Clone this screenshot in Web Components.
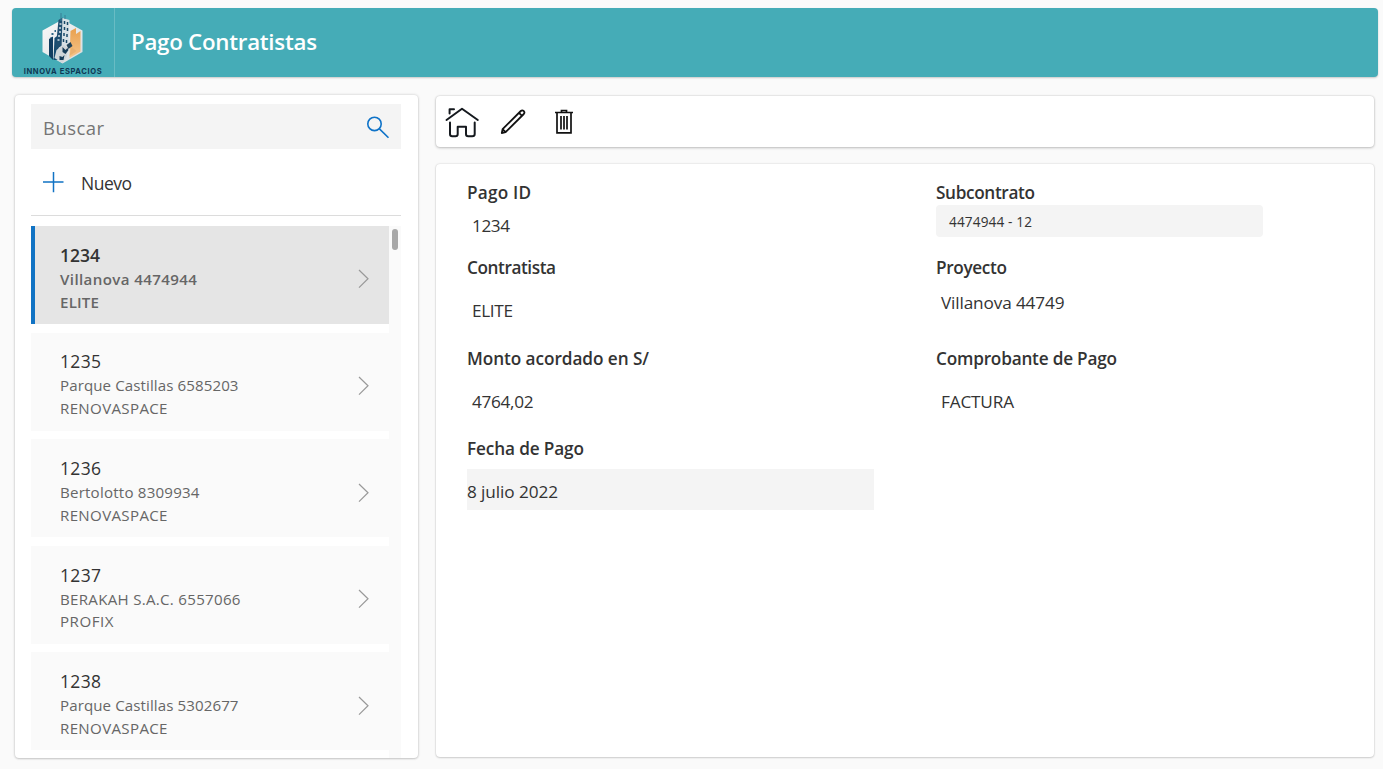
<!DOCTYPE html>
<html lang="es">
<head>
<meta charset="utf-8">
<title>Pago Contratistas</title>
<style>
html,body{margin:0;height:100%}
body{background:#fafafa;font-family:"Open Sans","Noto Sans",sans-serif;overflow:hidden}
</style>
</head>
<body>
<pago-app></pago-app>
<script>
const define = (name, html, setup) => customElements.define(name, class extends HTMLElement {
  constructor() {
    super();
    this.attachShadow({ mode: 'open' });
  }
  connectedCallback() {
    if (this.shadowRoot.childNodes.length) return;
    this.shadowRoot.innerHTML = html;
    if (setup) setup(this, this.shadowRoot);
  }
});

/* A line of text whose tracking is adjusted to span `w` pixels. */
define('fit-text', `<style>
:host{display:block;white-space:pre;line-height:24px}
span{display:inline-block}
</style><span><slot></slot></span>`, (host, root) => {
  const span = root.querySelector('span');
  const target = parseFloat(host.getAttribute('w'));
  const count = host.textContent.length;
  if (target && count > 1) {
    const natural = span.getBoundingClientRect().width;
    span.style.letterSpacing = ((target - natural) / (count - 1)).toFixed(3) + 'px';
  }
});

define('brand-logo', `<style>
:host{display:flex;flex-direction:column;align-items:center;height:70px;border-right:1px solid #69bcc4;box-sizing:border-box;padding-top:4px;flex:none;width:103px}
svg{display:block;flex:none}
fit-text{font:700 7.6px/9px "Inter","Open Sans",sans-serif;color:#0f3854;margin-top:3.5px}
</style>
<svg width="46" height="52" viewBox="39.500 12 46 52">
<defs><linearGradient id="g" x1="0" y1="0" x2="1" y2="1"><stop offset="0" stop-color="#fafafa"/><stop offset="1" stop-color="#d5dadd"/></linearGradient>
<linearGradient id="o" x1="0" y1="0" x2="0" y2="1"><stop offset="0" stop-color="#e9a04d"/><stop offset="1" stop-color="#f5c58b"/></linearGradient></defs>
<path d="M62 19.500 82 30.500V52L62 63.500 42 52V30.500Z" fill="url(#g)"/>
<path d="M70 31 75.500 28V34L80 31V51.500L69 58Z" fill="url(#o)"/>
<path d="M48.500 39 52.500 36.500V60L48.500 56Z" fill="#123d60"/>
<path d="M54 38 58 35V60H53Z" fill="#174b70"/>
<path d="M58 20 62 17.500 63.500 44 55 50Z" fill="#204f70"/>
<path d="M62 18 69 20 68 45 61 49Z" fill="#d8e0e5"/>
<path d="M60.500 13V21M64.500 15V19" stroke="#397f96" stroke-width="1"/>
<path d="M59 24h2M58.500 28h2M58.500 32h2M57.500 36h2M57 40h2" stroke="#cfdce3" stroke-width="1.300"/>
<path d="M64 21v3M67 22v3M64 27v3M67 28v3M63.500 33v3M66.500 34v3M63 39v3M66 40v3" stroke="#194867" stroke-width="1.500"/>
<path d="M51 33h2v2h-2zM54 30h1.500v2H54zM50 37h1.500v1H50z" fill="#2f6686"/>
<path d="M56 50 63 45 68 48 66 57 62 63 54 58Z" fill="#cfd5d9"/>
<path d="M62 47 65 50 67 48 68 50 65 54 62 52ZM59 56 62 57 64 55 63 60 59 60Z" fill="#173c59"/>
<path d="M66 45 70 42 72 46 68 49Z" fill="#22445b"/>
<path d="M71 47 76 51 69 56Z" fill="#e8b170"/>
</svg><fit-text w="78">INNOVA ESPACIOS</fit-text>`);

define('app-header', `<style>
:host{display:flex;height:69.500px;background:#45acb7;border-radius:4px;box-shadow:0 1px 2px #0003;overflow:hidden}
fit-text{font-weight:600;font-size:22.300px;line-height:28px;color:#fff;margin:20px 0 0 16px}
</style><brand-logo></brand-logo><fit-text w="186">Pago Contratistas</fit-text>`);

define('search-box', `<style>
:host{display:flex;justify-content:space-between;height:45px;background:#f4f4f4;padding:0 10.500px 0 12.500px;box-sizing:border-box}
fit-text{font-size:18.500px;line-height:26px;color:#757575;margin-top:10.800px}
svg{margin-top:11.500px}
</style><fit-text w="61">Buscar</fit-text>
<svg width="24" height="24" viewBox="0 0 24 24" fill="none" stroke="#0f73c8" stroke-width="1.600"><circle cx="8.500" cy="7.900" r="6.700"/><path d="M13.200 12.600 22.500 21.700"/></svg>`);

define('new-button', `<style>
:host{display:flex;height:65.500px;border-bottom:1px solid #dcdcdc;padding-left:12px;gap:17.500px;color:#333}
svg{margin-top:22px}
fit-text{margin-top:21.500px;font-size:17.500px}
</style><svg width="21" height="22" viewBox="0 0 21 22" stroke="#1173c4" stroke-width="1.500"><path d="M0 10.900H20.500M10.500 .900V21.200"/></svg>
<fit-text w="51">Nuevo</fit-text>`);

define('list-item', `<style>
:host{display:flex;justify-content:space-between;height:98px;background:#fafafa;box-sizing:border-box;padding:0 19px 0 29.500px;color:#666}
:host([selected]){background:#e5e5e5;border-left:4px solid #1173c4;padding-left:25.500px;font-weight:600}
.t{padding-top:16.800px}
.id{font-size:17.500px;line-height:25px;color:#333}
.n{font-size:15.100px;line-height:22.800px}
svg{margin-top:43.500px}
</style><div class="t"></div>
<svg width="13" height="20" viewBox="0 0 13 20" fill="none" stroke="#999" stroke-width="1.200"><path d="M2 1 11 9.800 2 18.600"/></svg>`, (host, root) => {
  const box = root.querySelector('.t');
  const widths = host.getAttribute('w').split(',');
  ['id', 'name', 'company'].forEach((key, i) => {
    const line = document.createElement('fit-text');
    line.className = i ? 'n' : 'id';
    line.setAttribute('w', widths[i]);
    line.textContent = host.getAttribute('data-' + key);
    box.append(line);
  });
});

define('side-panel', `<style>
:host{display:block;width:403px;height:663.500px;box-sizing:border-box;background:#fff;border-radius:4px;box-shadow:0 0 3px #0003,0 1px 2px #0002;padding:9.900px 17px 0 16px;overflow:hidden}
.g{display:flex;height:533px;margin-top:10px}
.l{display:flex;flex-direction:column;gap:8.600px;width:358px;flex:none}
.s{width:12px;background:#fafafa;padding:3.500px 0 0 3px;box-sizing:border-box}
.s i{display:block;width:6px;height:20.500px;border-radius:3px;background:#a8a8a8}
</style><search-box></search-box><new-button></new-button>
<div class="g"><div class="l">
<list-item selected data-id="1234" data-name="Villanova 4474944" data-company="ELITE" w="40,137,39"></list-item>
<list-item data-id="1235" data-name="Parque Castillas 6585203" data-company="RENOVASPACE" w="41,178.5,107.500"></list-item>
<list-item data-id="1236" data-name="Bertolotto 8309934" data-company="RENOVASPACE" w="41,139.500,107.500"></list-item>
<list-item data-id="1237" data-name="BERAKAH S.A.C. 6557066" data-company="PROFIX" w="41,180.500,53.500"></list-item>
<list-item data-id="1238" data-name="Parque Castillas 5302677" data-company="RENOVASPACE" w="41,178.500,107.500"></list-item>
</div><div class="s"><i></i></div></div>`);

define('tool-bar', `<style>
:host{display:block;height:51px;background:#fff;border-radius:4px;box-shadow:0 0 2px #0003,0 1px 3px #0003}
div{display:flex;padding:9.500px 0 0 9px}
svg{display:block}
</style><div>
<svg width="36" height="32" viewBox="445 106 36 32" fill="none" stroke="#15191e" stroke-width="2" stroke-linecap="round" stroke-linejoin="round"><path d="M446.500 120 462 108.700 477.800 120M449.600 113.500V109.200H454M450 122.500V134Q450 136.200 452.200 136.200H455.500Q457.700 136.200 457.700 134V126.800H466V134Q466 136.200 468.200 136.200H472.200Q474.700 136.200 474.700 134V122.500"/></svg>
<svg style="margin-left:19px" width="27" height="32" viewBox="500 106 27 32" fill="none" stroke="#111" stroke-width="1.800" stroke-linejoin="round"><path d="M501.800 133 502.600 129.200 520.800 111Q522.200 109.700 523.700 111 525.100 112.600 523.800 114L505.600 132.200ZM502.600 129.200 505.600 132.200M519 112.800 522 115.800"/></svg>
<svg style="margin-left:27px" width="20" height="32" viewBox="554 106 20 32" fill="none" stroke="#111" stroke-width="1.700"><path d="M555 112.500H573M561.500 112V110.500H566.500V112M557 113V132.800H571V113M561 116V129.500M564 116V129.500M567 116V129.500"/></svg>
</div>`);

define('form-field', `<style>
:host{display:block;color:#333}
fit-text{font-size:17.200px}
.label{font-weight:600}
.value{box-sizing:border-box;height:24px;padding-left:5px;margin-top:var(--gap,9px)}
:host([kind=combo]) .value{width:327px;height:32px;background:#f4f4f4;border-radius:4px;padding:4.500px 0 0 13px;font-size:13.600px;margin-top:0}
:host([kind=date]) .value{width:407px;height:41px;background:#f4f4f4;padding:11px 0 0 0;margin-top:8px}
</style><fit-text class="label"></fit-text><fit-text class="value"></fit-text>`, (host, root) => {
  const widths = host.getAttribute('w').split(',');
  ['label', 'value'].forEach((key, i) => {
    const old = root.querySelector('.' + key);
    const line = document.createElement('fit-text');
    line.className = key;
    line.setAttribute('w', widths[i]);
    line.textContent = host.getAttribute(key);
    old.replaceWith(line);
  });
});

define('detail-form', `<style>
:host{display:grid;grid-template-columns:469px 1fr;grid-template-rows:75px 91px 90px 90px;height:593px;box-sizing:border-box;background:#fff;border-radius:4px;box-shadow:0 0 2px #0003,0 1px 2px #0002;padding:17px 0 0 31px}
</style>
<form-field label="Pago ID" value="1234" w="64,38"></form-field>
<form-field kind="combo" label="Subcontrato" value="4474944 - 12" w="99,83"></form-field>
<form-field label="Contratista" value="ELITE" w="89,41" style="--gap:19px"></form-field>
<form-field label="Proyecto" value="Villanova 44749" w="71,123.500" style="--gap:11px"></form-field>
<form-field label="Monto acordado en S/" value="4764,02" w="182,61.500" style="--gap:19px"></form-field>
<form-field label="Comprobante de Pago" value="FACTURA" w="181,73" style="--gap:19px"></form-field>
<form-field kind="date" label="Fecha de Pago" value="8 julio 2022" w="117,91"></form-field>`);

define('pago-app', `<style>
:host{display:block;box-sizing:border-box;width:1383px;height:769px;padding:7.500px 5px 0 12px}
main{display:flex;gap:18.500px;margin-left:2.500px;padding-top:17.600px}
section{width:938px}
tool-bar{margin-top:1.900px}
detail-form{margin-top:16.600px}
</style><app-header></app-header><main><side-panel></side-panel><section><tool-bar></tool-bar><detail-form></detail-form></section></main>`);
</script>
</body>
</html>
